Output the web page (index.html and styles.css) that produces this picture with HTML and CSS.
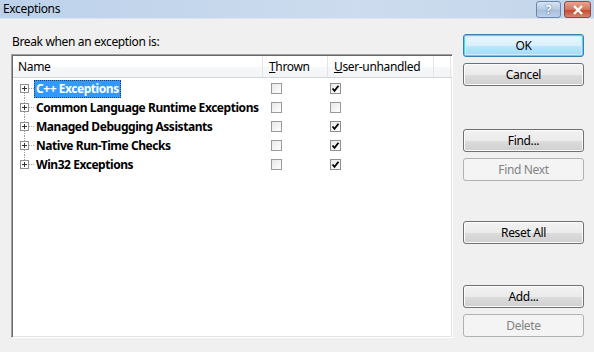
FILE: index.html
```html
<!DOCTYPE html>
<html lang="en">
<head>
    <meta charset="UTF-8">
    <title>Exceptions</title>
    <link rel="stylesheet" href="styles.css">
</head>
<body>
    <div class="window">
        <div class="titlebar">
            <span class="title">Exceptions</span>
            <div class="caption-buttons">
                <span class="cap-btn help">?</span>
                <span class="cap-btn close">
                    <svg width="12" height="10" viewBox="0 0 12 10"><path d="M2 1 L10 9 M10 1 L2 9" stroke="#fff" stroke-width="2.4"/></svg>
                </span>
            </div>
        </div>

        <div class="content">
            <div class="left">
                <div class="caption">Break when an exception is:</div>
                <div class="listbox">
                    <div class="header">
                        <div class="col col-name">Name</div>
                        <div class="col col-thrown"><u>T</u>hrown</div>
                        <div class="col col-user"><u>U</u>ser-unhandled</div>
                        <div class="col col-rest"></div>
                    </div>

                    <!-- дерево категорий исключений -->
                    <div class="tree">
                        <div class="row first">
                            <div class="name">
                                <span class="node"><svg class="plus" width="9" height="9" viewBox="0 0 9 9"><rect x="0.5" y="0.5" width="8" height="8" fill="#fff" stroke="#919191"/><path d="M2 4.5 H7 M4.5 2 V7" stroke="#333"/></svg></span>
                                <span class="label selected">C++ Exceptions</span>
                            </div>
                            <div class="cell-thrown"><span class="check"></span></div>
                            <div class="cell-user"><span class="check on"></span></div>
                        </div>
                        <div class="row">
                            <div class="name">
                                <span class="node"><svg class="plus" width="9" height="9" viewBox="0 0 9 9"><rect x="0.5" y="0.5" width="8" height="8" fill="#fff" stroke="#919191"/><path d="M2 4.5 H7 M4.5 2 V7" stroke="#333"/></svg></span>
                                <span class="label">Common Language Runtime Exceptions</span>
                            </div>
                            <div class="cell-thrown"><span class="check"></span></div>
                            <div class="cell-user"><span class="check"></span></div>
                        </div>
                        <div class="row">
                            <div class="name">
                                <span class="node"><svg class="plus" width="9" height="9" viewBox="0 0 9 9"><rect x="0.5" y="0.5" width="8" height="8" fill="#fff" stroke="#919191"/><path d="M2 4.5 H7 M4.5 2 V7" stroke="#333"/></svg></span>
                                <span class="label">Managed Debugging Assistants</span>
                            </div>
                            <div class="cell-thrown"><span class="check"></span></div>
                            <div class="cell-user"><span class="check on"></span></div>
                        </div>
                        <div class="row">
                            <div class="name">
                                <span class="node"><svg class="plus" width="9" height="9" viewBox="0 0 9 9"><rect x="0.5" y="0.5" width="8" height="8" fill="#fff" stroke="#919191"/><path d="M2 4.5 H7 M4.5 2 V7" stroke="#333"/></svg></span>
                                <span class="label">Native Run-Time Checks</span>
                            </div>
                            <div class="cell-thrown"><span class="check"></span></div>
                            <div class="cell-user"><span class="check on"></span></div>
                        </div>
                        <div class="row last">
                            <div class="name">
                                <span class="node"><svg class="plus" width="9" height="9" viewBox="0 0 9 9"><rect x="0.5" y="0.5" width="8" height="8" fill="#fff" stroke="#919191"/><path d="M2 4.5 H7 M4.5 2 V7" stroke="#333"/></svg></span>
                                <span class="label">Win32 Exceptions</span>
                            </div>
                            <div class="cell-thrown"><span class="check"></span></div>
                            <div class="cell-user"><span class="check on"></span></div>
                        </div>
                    </div>
                </div>
            </div>

            <div class="buttons">
                <button class="button default">OK</button>
                <button class="button">Cancel</button>
                <button class="button gap-find">Find...</button>
                <button class="button" disabled>Find Next</button>
                <button class="button gap-reset">Reset All</button>
                <button class="button gap-add">Add...</button>
                <button class="button" disabled>Delete</button>
            </div>
        </div>
    </div>
</body>
</html>
```

FILE: styles.css
```css
body {
    margin: 0;
    font-family: "Noto Sans", "Open Sans", sans-serif;
    font-size: 12px;
    letter-spacing: -0.35px;
    color: #000;
    background: #f0f0f0;
}
.window {
    width: 594px;
    height: 352px;
    background: #f0f0f0;
    overflow: hidden;
}
.titlebar {
    height: 18px;
    display: flex;
    align-items: center;
    justify-content: space-between;
    background: linear-gradient(to right, #bcd1ea, #cddcee 60%, #c3d5eb);
    border-bottom: 1px solid #dbe6f3;
}
.title {
    padding-left: 3px;
    font-size: 12px;
    line-height: 18px;
}
.caption-buttons {
    display: flex;
    gap: 3px;
    padding-right: 3px;
    align-self: flex-start;
    padding-top: 1px;
}
.cap-btn {
    height: 15px;
    border: 1px solid #6d87a8;
    border-radius: 3px;
    display: flex;
    align-items: center;
    justify-content: center;
    box-sizing: content-box;
}
.help {
    width: 23px;
    background: linear-gradient(#d6e3f2, #b5c9e2 50%, #a5bcdc 51%, #bed1ea);
    color: #fff;
    font-weight: bold;
    font-size: 13px;
    line-height: 15px;
    text-shadow: 0 0 1px #3a5a85, 0 0 1px #3a5a85;
}
.close {
    width: 25px;
    border-color: #8d4a43;
    background: linear-gradient(#e8a493, #d4745f 50%, #c4452c 51%, #d2866d);
}

.content {
    display: flex;
    padding: 15px 0 0 11px;
}
.left {
    width: 442px;
}
.caption {
    line-height: 15px;
    padding-left: 1px;
    margin-bottom: 5px;
}
.listbox {
    height: 284px;
    box-sizing: border-box;
    background: #fff;
    border-top: 1px solid #a0a0a0;
    border-left: 1px solid #a0a0a0;
    border-right: 1px solid #fff;
    border-bottom: 1px solid #fff;
    box-shadow: inset 1px 1px 0 #696969, inset -1px -1px 0 #e3e3e3;
    padding: 1px 0 0 1px;
}
.header {
    display: flex;
    height: 21px;
    border-bottom: 1px solid #d5d5d5;
    background: linear-gradient(#ffffff, #ffffff 50%, #f7f8fa 51%, #f3f4f6);
}
.col {
    line-height: 21px;
    border-right: 1px solid #e5e5e5;
    box-sizing: border-box;
}
.col-name {
    width: 250px;
    padding-left: 5px;
}
.col-thrown {
    width: 65px;
    padding-left: 6px;
}
.col-user {
    width: 106px;
    padding-left: 6px;
}
.col-rest {
    width: 17px;
}

.tree {
    padding-top: 1px;
}
.row {
    display: flex;
    height: 19px;
    align-items: center;
}
.name {
    width: 250px;
    display: flex;
    align-items: center;
    height: 19px;
    padding-left: 3px;
    box-sizing: border-box;
    white-space: nowrap;
}
.node {
    width: 18px;
    height: 19px;
    flex: none;
    display: flex;
    align-items: center;
    padding-left: 4px;
    box-sizing: border-box;
    background:
        repeating-linear-gradient(to right, #a0a0a0 0 1px, transparent 1px 2px) 13px 9px / 5px 1px no-repeat,
        repeating-linear-gradient(to bottom, #a0a0a0 0 1px, transparent 1px 2px) 8px 0 / 1px 19px no-repeat;
}
.row.first .node {
    background:
        repeating-linear-gradient(to right, #a0a0a0 0 1px, transparent 1px 2px) 13px 9px / 5px 1px no-repeat,
        repeating-linear-gradient(to bottom, #a0a0a0 0 1px, transparent 1px 2px) 8px 10px / 1px 9px no-repeat;
}
.row.last .node {
    background:
        repeating-linear-gradient(to right, #a0a0a0 0 1px, transparent 1px 2px) 13px 9px / 5px 1px no-repeat,
        repeating-linear-gradient(to bottom, #a0a0a0 0 1px, transparent 1px 2px) 8px 0 / 1px 9px no-repeat;
}
.plus {
    display: block;
    background: #fff;
}
.label {
    font-weight: bold;
    letter-spacing: -0.45px;
    line-height: 16px;
    padding: 1px 2px;
}
.label.selected {
    background: #3399ff;
    color: #fff;
    outline: 1px dotted #1d3f66;
    outline-offset: -1px;
}
.cell-thrown {
    width: 65px;
    padding-left: 8px;
    box-sizing: border-box;
    display: flex;
}
.cell-user {
    width: 106px;
    padding-left: 2px;
    box-sizing: border-box;
    display: flex;
}
.check {
    width: 11px;
    height: 11px;
    box-sizing: border-box;
    border: 1px solid #9a9a9a;
    background: linear-gradient(135deg, #e8e8e8, #ffffff);
}
.check.on {
    border-color: #8e8f8f;
    background: url("data:image/svg+xml,%3Csvg xmlns='http://www.w3.org/2000/svg' width='9' height='9' viewBox='0 0 9 9'%3E%3Cpath d='M1.5 4.5 L3.5 6.8 L7.5 1.8' fill='none' stroke='%23000' stroke-width='1.8'/%3E%3C/svg%3E") center / 9px 9px no-repeat, linear-gradient(135deg, #e8e8e8, #ffffff);
}

.buttons {
    margin-left: 10px;
    width: 121px;
    display: flex;
    flex-direction: column;
    gap: 6px;
}
.button {
    height: 23px;
    width: 121px;
    font-family: inherit;
    font-size: 12px;
    letter-spacing: inherit;
    color: #000;
    border: 1px solid #707070;
    border-radius: 3px;
    background: linear-gradient(#f2f2f2, #ebebeb 50%, #dddddd 51%, #cfcfcf);
    box-shadow: inset 0 0 0 1px #fcfcfc;
    padding: 0;
}
.button.default {
    border-color: #3c7fb1;
    box-shadow: inset 0 0 0 1px #48d8fb, inset 0 0 0 2px #cdeefb;
    background: linear-gradient(#eaf6fd, #d9f0fc 50%, #bee6fd 51%, #a7d9f5);
}
.button:disabled {
    border-color: #adb2b5;
    background: #f4f4f4;
    color: #838383;
    box-shadow: none;
}
.gap-find {
    margin-top: 37px;
}
.gap-reset {
    margin-top: 34px;
}
.gap-add {
    margin-top: 35px;
}
```
